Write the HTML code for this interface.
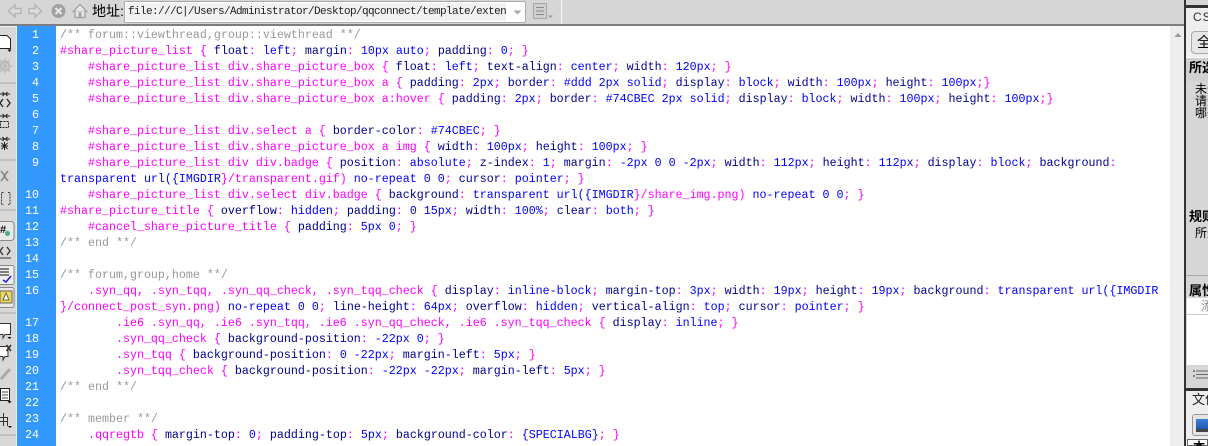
<!DOCTYPE html>
<html><head><meta charset="utf-8"><style>
html,body{margin:0;padding:0;height:446px;overflow:hidden}
body{width:1208px;position:relative;background:#d6d6d6;font-family:"Liberation Sans","Noto Sans CJK SC",sans-serif}
div{position:absolute;box-sizing:border-box}
svg{position:absolute;overflow:visible}
#code,#nums{font-family:"Liberation Mono",monospace;font-size:11.67px;line-height:16px;white-space:pre}
#code{left:60px;top:27px;color:#f0f}
#code i{font-style:normal;color:#000090}
#code b{font-weight:normal;color:#00f}
#code u{text-decoration:none;color:#999}
#nums{left:17px;top:26px;width:39px;height:420px;background:#39f;color:#fff;text-align:right;padding-right:17px;padding-top:1px}
.t{color:#000;white-space:nowrap}
</style></head><body>
<div style="left:0;top:0;width:1185px;height:26px;background:#d6d6d6;border-bottom:2px solid #7d7d7d"></div>
<div style="left:561px;top:0;width:1px;height:24px;background:#f8f8f8"></div>

<svg style="left:0;top:0" width="125" height="24">
<path d="M8.500 11 L15 5 V8.500 H21 V13.500 H15 V17 Z" fill="#dcdcdc" stroke="#b5b5b5" stroke-width="1.500"/>
<path d="M41.500 11 L35 5 V8.500 H29 V13.500 H35 V17 Z" fill="#dcdcdc" stroke="#b5b5b5" stroke-width="1.500"/>
<circle cx="58.500" cy="11" r="7" fill="#a0a0a0"/>
<path d="M55.500 8 L61.500 14 M61.500 8 L55.500 14" stroke="#e8e8e8" stroke-width="2.200"/>
<path d="M72.500 12 L80 4.500 L87.500 12 M75 10.500 V17.500 H85 V10.500" fill="#e6e6e6" stroke="#a6a6a6" stroke-width="1.500"/>
<rect x="78.500" y="12" width="3" height="5.500" fill="#a6a6a6"/>
</svg>
<div class="t" style="left:92px;top:1px;font-size:14px;line-height:20px">地址:</div>
<div style="left:124px;top:1px;width:402px;height:22px;background:#fff;border:1px solid #aaa;border-radius:2px"></div>
<div style="left:126px;top:3px;width:380px;height:18px;background:#f1f1f1"></div>
<div style="left:128px;top:3px;font:11px/18px 'Liberation Mono',monospace;letter-spacing:-0.6px;color:#222;white-space:pre">file:///C|/Users/Administrator/Desktop/qqconnect/template/exten</div>
<svg style="left:513px;top:10px" width="10" height="6"><path d="M0.500 0.500 H8.500 L4.500 4.500 Z" fill="#aaa"/></svg>
<svg style="left:533px;top:3px" width="22" height="18">
<rect x="0.500" y="0.500" width="13" height="15" fill="#cfcfcf" stroke="#a5a5a5"/>
<path d="M3 4.500 H11 M3 8 H11 M3 11.500 H11" stroke="#888"/>
<path d="M15 12.500 H20 L17.500 15 Z" fill="#999"/>
</svg>

<div style="left:0;top:26px;width:17px;height:420px;background:#d8d8d8;border-top:1px solid #f4f4f4;border-right:1px solid #eee"></div>
<svg style="left:0;top:0" width="17" height="446">
<path d="M0 35.500 H7 L10.500 39 V48.500 H0" fill="#fff" stroke="#222"/>
<path d="M7.500 49.500 H11.500 L9.500 52 Z" fill="#000"/>
<circle cx="5" cy="66" r="4.500" fill="none" stroke="#b9b9b9" stroke-width="2"/>
<path d="M5 58 V74 M-3 66 H13 M0 60 L10 72 M10 60 L0 72" stroke="#b9b9b9"/>
<path d="M0 83 H16" stroke="#aaa"/>
<path d="M0 94 H4 M2.500 92 L4.500 94 L2.500 96 M10 94 H6 M7.500 92 L5.500 94 L7.500 96" stroke="#222" fill="none"/>
<path d="M3 99 L0 103 L3 107 M7 99 L10 103 L7 107" stroke="#222" fill="none" stroke-width="1.300"/>
<path d="M0 116 H4 M2.500 114 L4.500 116 L2.500 118 M10 116 H6 M7.500 114 L5.500 116 L7.500 118" stroke="#222" fill="none"/>
<rect x="0.500" y="121.500" width="8" height="6" fill="none" stroke="#222" stroke-dasharray="2 1"/>
<path d="M0 139 H4 M2.500 137 L4.500 139 L2.500 141 M10 139 H6 M7.500 137 L5.500 139 L7.500 141" stroke="#222" fill="none"/>
<path d="M4.500 142 V150 M1 146 H8 M1.500 143 L7.500 149 M7.500 143 L1.500 149" stroke="#222"/>
<path d="M0 160 H16" stroke="#aaa"/>
<path d="M1 171 L5 176 L1 181 M8 171 L4 176 L8 181" stroke="#888" fill="none" stroke-width="1.700"/>
<path d="M3.500 192.500 H1.500 V204.500 H3.500 M8 192.500 H10 V204.500 H8" stroke="#333" fill="none" stroke-dasharray="2 1"/>
<path d="M0 210 H16" stroke="#aaa"/>
<rect x="-3" y="221.500" width="17" height="19" rx="3" fill="#e8e8e8" stroke="#888"/>
<text x="0" y="233" font-family="Liberation Sans" font-size="11" font-weight="bold" fill="#111">#</text>
<circle cx="7.500" cy="233.500" r="2.500" fill="#4a8"/>
<path d="M3 247 L0 251 L3 255 M7 247 L10 251 L7 255" stroke="#333" fill="none" stroke-width="1.300"/>
<path d="M0 258 H11" stroke="#333"/>
<rect x="-3" y="265.500" width="17" height="19" rx="2" fill="#eee" stroke="#888"/>
<path d="M0 269 H9 M0 272 H9 M0 275 H9" stroke="#111"/>
<path d="M3 280 L6 282 L11 276" stroke="#22c" fill="none" stroke-width="1.500"/>
<rect x="-3" y="287.500" width="17" height="20" rx="2" fill="#e8e8e8" stroke="#888"/>
<path d="M0 291 H12 V303 H0 Z" fill="#eed860" stroke="#665"/>
<path d="M3 300 L6 293 L9 300 Z" fill="#fff" stroke="#665"/>
<path d="M0 313 H16" stroke="#aaa"/>
<path d="M0 323.500 H10.500 V334.500 H5 L3 338 V334.500 H0" fill="#fff" stroke="#333"/>
<path d="M7.500 337 H11.500 L9.500 339 Z" fill="#000"/>
<path d="M0 346.500 H8 V356.500 H5 L3 360 V356.500 H0" fill="#fff" stroke="#333"/>
<path d="M6.500 345 L11 351 M11 345 L6.500 351" stroke="#333" stroke-width="1.500"/>
<path d="M1 379 L10 369" stroke="#aaa" stroke-width="3"/>
<rect x="0.500" y="388.500" width="9" height="12" fill="#fff" stroke="#222"/>
<path d="M2 392 H8 M2 395 H8 M2 398 H8" stroke="#444"/>
<path d="M7.500 401 H11.500 L9.500 403.500 Z" fill="#000"/>
<path d="M0 417.500 H8 M0 421.500 H8 M3.500 413 V426 M7.500 417 V426" stroke="#333"/>
<path d="M8 426 H12 L10 428 Z" fill="#000"/>
<path d="M0 435 H16" stroke="#aaa"/>
</svg>

<div id="nums">1
2
3
4
5
6
7
8
9

10
11
12
13
14
15
16

17
18
19
20
21
22
23
24</div>

<div style="left:56px;top:26px;width:1114px;height:420px;background:#fff"></div>
<div id="code"><u>/** forum::viewthread,group::viewthread **/</u>
#share_picture_list { <i>float</i>: <b>left</b>; <i>margin</i>: <b>10px auto</b>; <i>padding</i>: <b>0</b>; }
    #share_picture_list div.share_picture_box { <i>float</i>: <b>left</b>; <i>text-align</i>: <b>center</b>; <i>width</i>: <b>120px</b>; }
    #share_picture_list div.share_picture_box a { <i>padding</i>: <b>2px</b>; <i>border</i>: <b>#ddd 2px solid</b>; <i>display</i>: <b>block</b>; <i>width</i>: <b>100px</b>; <i>height</i>: <b>100px</b>;}
    #share_picture_list div.share_picture_box a:hover { <i>padding</i>: <b>2px</b>; <i>border</i>: <b>#74CBEC 2px solid</b>; <i>display</i>: <b>block</b>; <i>width</i>: <b>100px</b>; <i>height</i>: <b>100px</b>;}

    #share_picture_list div.select a { <i>border-color</i>: <b>#74CBEC</b>; }
    #share_picture_list div.share_picture_box a img { <i>width</i>: <b>100px</b>; <i>height</i>: <b>100px</b>; }
    #share_picture_list div div.badge { <i>position</i>: <b>absolute</b>; <i>z-index</i>: <b>1</b>; <i>margin</i>: <b>-2px 0 0 -2px</b>; <i>width</i>: <b>112px</b>; <i>height</i>: <b>112px</b>; <i>display</i>: <b>block</b>; <i>background</i>:
<b>transparent url({IMGDIR</b>}/transparent.gif) <b>no-repeat 0 0</b>; <i>cursor</i>: <b>pointer</b>; }
    #share_picture_list div.select div.badge { <i>background</i>: <b>transparent url({IMGDIR</b>}/share_img.png) <b>no-repeat 0 0</b>; }
#share_picture_title { <i>overflow</i>: <b>hidden</b>; <i>padding</i>: <b>0 15px</b>; <i>width</i>: <b>100%</b>; <i>clear</i>: <b>both</b>; }
    #cancel_share_picture_title { <i>padding</i>: <b>5px 0</b>; }
<u>/** end **/</u>

<u>/** forum,group,home **/</u>
    .syn_qq, .syn_tqq, .syn_qq_check, .syn_tqq_check { <i>display</i>: <b>inline-block</b>; <i>margin-top</i>: <b>3px</b>; <i>width</i>: <b>19px</b>; <i>height</i>: <b>19px</b>; <i>background</i>: <b>transparent url({IMGDIR</b>
}/connect_post_syn.png) <b>no-repeat 0 0</b>; <i>line-height</i>: <b>64px</b>; <i>overflow</i>: <b>hidden</b>; <i>vertical-align</i>: <b>top</b>; <i>cursor</i>: <b>pointer</b>; }
        .ie6 .syn_qq, .ie6 .syn_tqq, .ie6 .syn_qq_check, .ie6 .syn_tqq_check { <i>display</i>: <b>inline</b>; }
        .syn_qq_check { <i>background-position</i>: <b>-22px 0</b>; }
        .syn_tqq { <i>background-position</i>: <b>0 -22px</b>; <i>margin-left</i>: <b>5px</b>; }
        .syn_tqq_check { <i>background-position</i>: <b>-22px -22px</b>; <i>margin-left</i>: <b>5px</b>; }
<u>/** end **/</u>

<u>/** member **/</u>
    .qqregtb { <i>margin-top</i>: <b>0</b>; <i>padding-top</i>: <b>5px</b>; <i>background-color</i>: <b>{SPECIALBG}</b>; }</div>

<div style="left:1170px;top:26px;width:15px;height:420px;background:#eee"></div>
<svg style="left:1174px;top:32px" width="9" height="6"><path d="M0.500 5 H7.500 L4 1 Z" fill="#999"/></svg>

<div style="left:1184px;top:0;width:24px;height:446px;background:#d6d6d6;border-left:2px solid #333"></div>
<div style="left:1186px;top:5px;width:22px;height:3px;background:#333"></div>
<div style="left:1186px;top:8px;width:22px;height:49px;background:#eee"></div>
<div class="t" style="left:1193px;top:9px;font-size:12px;line-height:16px;color:#333;letter-spacing:1px">CSS</div>
<div style="left:1191px;top:31px;width:30px;height:23px;background:#e6e6e6;border:1px solid #aaa;border-radius:4px"></div>
<div class="t" style="left:1197px;top:34px;font-size:14px;line-height:16px">全部</div>
<div style="left:1186px;top:57px;width:22px;height:24px;background:#d0d0d0;border-top:1px solid #fff"></div>
<div class="t" style="left:1189px;top:60px;font-size:13px;line-height:16px;font-weight:bold">所选内容</div>
<div class="t" style="left:1195px;top:83px;font-size:12px;line-height:12px">未选<br>请选<br>哪些</div>
<div class="t" style="left:1189px;top:209px;font-size:13px;line-height:16px;font-weight:bold">规则</div>
<div class="t" style="left:1195px;top:225px;font-size:12px;line-height:16px">所选</div>
<div style="left:1186px;top:275px;width:22px;height:1px;background:#aaa"></div>
<div class="t" style="left:1189px;top:283px;font-size:13px;line-height:16px;font-weight:bold">属性</div>
<div style="left:1187px;top:298px;width:21px;height:67px;background:#fff"></div>
<div style="left:1187px;top:314px;width:21px;height:1px;background:#ccc"></div>
<div class="t" style="left:1201px;top:299px;font-size:12px;line-height:14px;color:#888">添</div>
<svg style="left:1193px;top:369px" width="15" height="12"><path d="M3 2 H15 M3 5.500 H15 M3 9 H15 M0 2 H2 M0 7 H2 M1 1 V3 M1 6 V8" stroke="#666"/></svg>
<div style="left:1186px;top:388px;width:22px;height:3px;background:#333"></div>
<div style="left:1186px;top:391px;width:22px;height:55px;background:#eee"></div>
<div class="t" style="left:1192px;top:392px;font-size:13px;line-height:16px;color:#222">文件</div>
<div style="left:1192px;top:414px;width:20px;height:22px;background:#e4e4e4;border:1px solid #999;border-radius:3px"></div>
<div style="left:1196px;top:419px;width:12px;height:13px;background:linear-gradient(#3d7fd8,#1e58b0);border-bottom:3px solid #444"></div>
<div style="left:1187px;top:439px;width:21px;height:7px;background:#fff;border:1px solid #666;overflow:hidden"></div>
<div class="t" style="left:1193px;top:440px;height:6px;overflow:hidden;font-size:12px;line-height:14px;font-weight:bold">本</div>
</body></html>
